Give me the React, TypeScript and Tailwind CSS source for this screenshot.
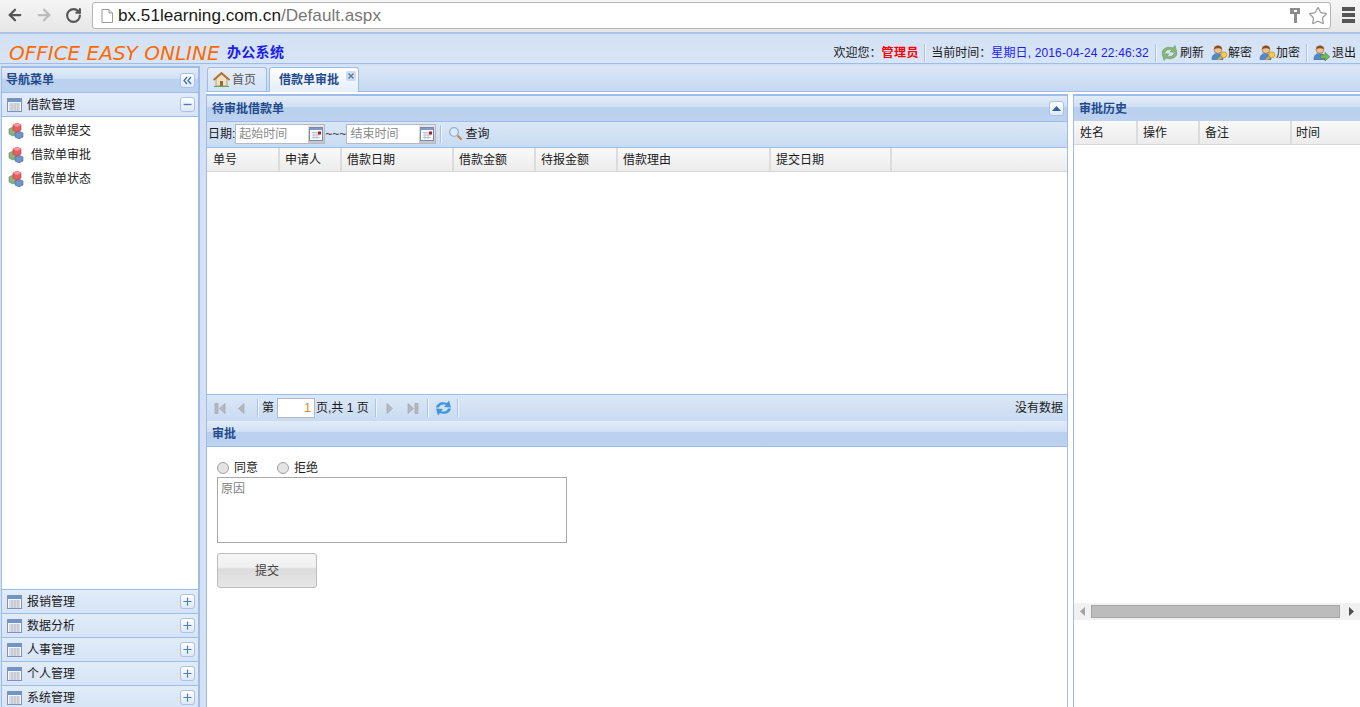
import { ArrowLeft, ArrowRight, RotateCw, Star } from "lucide-react";

const cjk = "font-['Liberation_Sans','Noto_Sans_CJK_SC',sans-serif]";
const titleBg = "bg-[linear-gradient(to_bottom,#e3ecf8_0%,#cfdff3_45%,#b9d0ee_46%,#bcd2ef_100%)]";
const barBg = "bg-[linear-gradient(to_bottom,#dbe7f6,#c9dbf1)]";
const headBg = "bg-[linear-gradient(to_bottom,#f9f9f9,#ececec)]";

function TableIcon() {
  return (
    <svg width="15" height="14" viewBox="0 0 15 14" className="shrink-0">
      <rect x="0.5" y="0.5" width="14" height="13" fill="#f4f6fa" stroke="#7f93b2" />
      <rect x="1" y="1" width="13" height="3" fill="#6e94cb" />
      <path d="M2 6h11M2 8h11M2 10h11M2 12h11M5 5v8M8 5v8M11 5v8" stroke="#b9bfc9" strokeWidth="1" />
    </svg>
  );
}

function BoxButton({ kind }: { kind: "plus" | "minus" | "left" | "up" }) {
  return (
    <span className="flex h-[15px] w-[15px] shrink-0 items-center justify-center rounded-[3px] border border-[#a9c3e6] bg-[linear-gradient(to_bottom,#ffffff,#dde9f8)]">
      <svg width="11" height="11" viewBox="0 0 11 11">
        {kind === "plus" && <path d="M1.5 5.5h8M5.5 1.5v8" stroke="#4f7fb8" strokeWidth="1.2" />}
        {kind === "minus" && <path d="M1.5 5.5h8" stroke="#4f7fb8" strokeWidth="1.4" />}
        {kind === "left" && <path d="M5 2L2 5.5 5 9M9 2L6 5.5 9 9" stroke="#3f6fa8" strokeWidth="1.3" fill="none" />}
        {kind === "up" && <path d="M5.5 3L10 8H1z" fill="#2f5f9f" />}
      </svg>
    </span>
  );
}

function CubesIcon() {
  return (
    <svg width="17" height="16" viewBox="0 0 17 16" className="shrink-0">
      <path d="M1 6l4-2 4 2v5l-4 2-4-2z" fill="#8cb07f" stroke="#5f8a5c" strokeWidth="0.6" />
      <path d="M7 10l4-2 4 2v4l-4 2-4-2z" fill="#6d95c6" stroke="#45699a" strokeWidth="0.6" />
      <path d="M5 2l4-2 4 2v5l-4 2-4-2z" fill="#ee5a5f" stroke="#b93a40" strokeWidth="0.6" />
      <path d="M5 2l4 2 4-2-4-2z" fill="#f79a9a" />
    </svg>
  );
}

function HomeIcon() {
  return (
    <svg width="17" height="15" viewBox="0 0 17 15" className="shrink-0">
      <path d="M3 7v7h11V7L8.5 2z" fill="#efe2c2" stroke="#a58a5a" strokeWidth="0.7" />
      <path d="M0.5 8L8.5 1l8 7" fill="none" stroke="#b0702e" strokeWidth="1.8" />
      <rect x="7" y="9" width="3" height="5" fill="#9a6b35" />
      <path d="M1 14.5h15" stroke="#6da35a" strokeWidth="1.2" />
    </svg>
  );
}

function CalendarButton() {
  return (
    <span className="flex h-[18px] w-[16px] shrink-0 items-center justify-center bg-[linear-gradient(to_bottom,#e6e6e6,#c4c4c4)]">
      <svg width="14" height="14" viewBox="0 0 14 14">
        <rect x="0.5" y="0.5" width="13" height="13" fill="#f6f8fb" stroke="#7b8ba3" />
        <rect x="1" y="1" width="12" height="2" fill="#7a9bcb" />
        <path d="M3 5.500h5M3 8h8M3 10.500h8M5 5v7M8 5v7" stroke="#bcc4d0" />
        <rect x="9" y="4.500" width="3" height="3" fill="#a81c2c" />
      </svg>
    </span>
  );
}

function SearchIcon() {
  return (
    <svg width="15" height="15" viewBox="0 0 15 15" className="shrink-0">
      <circle cx="6" cy="6" r="4.3" fill="#dcecfb" stroke="#8fb1d3" strokeWidth="1.3" />
      <path d="M9.5 9.5l4 4" stroke="#b98b52" strokeWidth="2.2" />
    </svg>
  );
}

function UserIcon({ badge }: { badge: "key" | "exit" }) {
  return (
    <svg width="17" height="16" viewBox="0 0 17 16" className="shrink-0">
      <path d="M1 14.500c0-4.500 2.500-6 5.500-6s5.500 1.500 5.500 6z" fill="#4f8ad0" stroke="#2f5f9b" strokeWidth="0.6" />
      <circle cx="7" cy="4.500" r="3.900" fill="#efc194" stroke="#8c5a30" strokeWidth="0.6" />
      <path d="M3 4.500C3 -.5 11 -.5 11 4.500 8.500 2.800 5.500 2.800 3 4.500z" fill="#8a4f22" />
      {badge === "key" ? (
        <>
          <path d="M11 11.500l-4 3.500" stroke="#e0ad2c" strokeWidth="2.200" />
          <circle cx="12.800" cy="9.800" r="3" fill="#f5cc4f" stroke="#b08520" strokeWidth="0.6" />
        </>
      ) : (
        <path d="M7.500 10h4.500V7.500l4.800 4.200-4.800 4.200V13.400H7.500z" fill="#74b95a" stroke="#3f8136" strokeWidth="0.6" />
      )}
    </svg>
  );
}

function GreenRefresh() {
  return (
    <svg width="17" height="16" viewBox="0 0 17 16" className="shrink-0">
      <path d="M1 7.500C2 3 7 1 12 3L14 .5l2 7-7-.5 2-2.200C8 3.800 4.500 4.800 4 7.500z" fill="#86b779" stroke="#5c9450" strokeWidth="0.5" />
      <path d="M16 8.500c-1 4.500-6 6.500-11 4.500L3 15.500 1 8.500l7 .5-2 2.200C9 12.200 12.500 11.200 13 8.500z" fill="#86b779" stroke="#5c9450" strokeWidth="0.5" />
    </svg>
  );
}

function BlueRefresh() {
  return (
    <svg width="17" height="16" viewBox="0 0 17 16" className="shrink-0">
      <path d="M1 7.500C2 3 7 1 12 3L14 .5l2 7-7-.5 2-2.200C8 3.800 4.500 4.800 4 7.500z" fill="#3d97dd" />
      <path d="M16 8.500c-1 4.500-6 6.500-11 4.500L3 15.500 1 8.500l7 .5-2 2.200C9 12.200 12.500 11.200 13 8.500z" fill="#3d97dd" />
    </svg>
  );
}

function Sep({ className = "mx-[4px]" }: { className?: string }) {
  return <span className={`h-[18px] w-px shrink-0 bg-[#a9c4e8] shadow-[1px_0_0_#eef4fb] ${className}`} />;
}

function PagerArrow({ dir, end }: { dir: "left" | "right"; end?: boolean }) {
  return (
    <svg width="16" height="13" viewBox="0 0 16 13" className="shrink-0">
      {dir === "left" ? (
        <>
          {end && <rect x="2" y="1.500" width="3" height="10" fill="#b4b9c0" stroke="#9aa0a8" strokeWidth="0.6" />}
          <path d="M12 1.500v10L6.500 6.500z" fill="#b4b9c0" stroke="#9aa0a8" strokeWidth="0.6" />
        </>
      ) : (
        <>
          <path d="M4 1.500v10l5.500-5z" fill="#b4b9c0" stroke="#9aa0a8" strokeWidth="0.6" />
          {end && <rect x="11" y="1.500" width="3" height="10" fill="#b4b9c0" stroke="#9aa0a8" strokeWidth="0.6" />}
        </>
      )}
    </svg>
  );
}

function PanelTitle({ text, children }: { text: string; children?: React.ReactNode }) {
  return (
    <div className={`flex h-[25px] shrink-0 items-center justify-between pr-[3px] pl-[5px] ${titleBg}`}>
      <span className="text-[12px] font-bold text-[#234a8c]">{text}</span>
      {children}
    </div>
  );
}

function DateInput({ placeholder }: { placeholder: string }) {
  return (
    <span className="flex h-[20px] w-[90px] shrink-0 items-center border border-[#b5b8c8] bg-white">
      <span className="flex-1 pl-[3px] text-[12px] text-[#8a8a8a]">{placeholder}</span>
      <CalendarButton />
    </span>
  );
}

function HeadCell({ text, w, pad = "pl-[5px]" }: { text: string; w: string; pad?: string }) {
  return (
    <div className={`flex h-full shrink-0 items-center border-r-2 border-[#dcdcdc] text-[12px] text-[#1a1a1a] ${pad} ${w}`}>
      {text}
    </div>
  );
}

function AccordionHead({ text, open }: { text: string; open?: boolean }) {
  return (
    <div className="flex h-[24px] shrink-0 items-center border-t border-[#9dbde8] bg-[linear-gradient(to_bottom,#e2ecf9,#d6e4f6)] pr-[3px] pl-[5px]">
      <TableIcon />
      <span className="ml-[5px] flex-1 text-[12px] text-[#1a1a1a]">{text}</span>
      <BoxButton kind={open ? "minus" : "plus"} />
    </div>
  );
}

function NavLink({ text }: { text: string }) {
  return (
    <div className="flex h-[24px] items-center pl-[6px]">
      <CubesIcon />
      <span className="ml-[6px] text-[12px] text-[#222]">{text}</span>
    </div>
  );
}

export default function App() {
  return (
    <div className={`flex h-screen flex-col overflow-hidden bg-[#d3e1f3] ${cjk}`}>
      {/* browser chrome */}
      <div className="flex h-[34px] shrink-0 items-start border-b-2 border-[#a9c4e8] bg-[linear-gradient(to_bottom,#f5f5f5,#e6e6e6)] pt-[2px]">
        <div className="flex h-[26px] w-[92px] items-center pl-[6px] text-[#555]">
          <ArrowLeft size={18} strokeWidth={3} />
          <ArrowRight size={18} strokeWidth={3} className="ml-[11px] text-[#bbb]" />
          <RotateCw size={17} strokeWidth={3} className="ml-[12px]" />
        </div>
        <div className="flex h-[27px] w-[1239px] items-center rounded-[3px] border border-[#b5b5b5] bg-white pr-[2px] pl-[8px] font-['Liberation_Sans',sans-serif]">
          <svg width="12" height="14" viewBox="0 0 12 14" className="shrink-0">
            <path d="M1 .5h7l3.500 3.500v9.500H1z" fill="#fff" stroke="#9a9a9a" />
            <path d="M8 .5V4h3.500" fill="#ddd" stroke="#9a9a9a" />
          </svg>
          <span className="ml-[5px] flex-1 text-[17.15px] text-[#1a1a1a]">
            bx.51learning.com.cn<span className="text-[#777]">/Default.aspx</span>
          </span>
          <svg width="10" height="17" viewBox="0 0 10 17" className="mr-[8px] shrink-0">
            <path d="M0 1h10v6H7v9H4V7H0z" fill="#8c8c8c" />
            <rect x="4" y="3" width="3" height="2" fill="#fff" />
          </svg>
          <Star size={20} strokeWidth={1.5} className="text-[#999]" />
        </div>
        <div className="flex h-[26px] flex-1 flex-col items-center justify-center gap-[2px] pl-[6px]">
          <span className="h-[4px] w-[13px] bg-[#555]" />
          <span className="h-[4px] w-[13px] bg-[#555]" />
          <span className="h-[4px] w-[13px] bg-[#555]" />
        </div>
      </div>

      {/* system header */}
      <div className="flex h-[30px] shrink-0 items-center justify-between border-b border-[#9dbde8] bg-[linear-gradient(to_bottom,#d3e1f4,#d8e5f6)] pr-[4px] pl-[9px]">
        <div className="flex items-center pt-[8px]">
          <span className="w-[209px] text-[20px] leading-none whitespace-nowrap text-[#ff6a00] italic font-['DejaVu_Sans',sans-serif]">
            OFFICE EASY ONLINE
          </span>
          <span className="ml-[9px] text-[14px] font-bold tracking-[0.3px] text-[#1c1cf0]">办公系统</span>
        </div>
        <div className="flex items-center pt-[8px] text-[12px] text-[#1a1a1a]">
          <span>欢迎您：</span>
          <span className="tracking-[0.6px] font-bold text-[#ff0000]">管理员</span>
          <Sep className="mr-[6px] ml-[5px]" />
          <span>当前时间：</span>
          <span className="tracking-[0.15px] text-[#1c1cf0]">星期日, 2016-04-24 22:46:32</span>
          <Sep className="mr-[5px] ml-[6px]" />
          <GreenRefresh />
          <span className="ml-[2px]">刷新</span>
          <span className="w-[7px]" />
          <UserIcon badge="key" />
          <span>解密</span>
          <span className="w-[7px]" />
          <UserIcon badge="key" />
          <span>加密</span>
          <Sep className="mx-[6px]" />
          <UserIcon badge="exit" />
          <span className="ml-[2px]">退出</span>
        </div>
      </div>

      <div className="flex min-h-0 flex-1 pt-[2px]">
        {/* left nav */}
        <div className="mb-[-2px] ml-[1px] flex w-[199px] shrink-0 flex-col border-t-2 border-r-2 border-l border-[#9dbde8] bg-white">
          <div className={`flex h-[24px] shrink-0 items-center justify-between pr-[3px] pl-[4px] ${titleBg}`}>
            <span className="text-[12px] font-bold text-[#234a8c]">导航菜单</span>
            <BoxButton kind="left" />
          </div>
          <AccordionHead text="借款管理" open />
          <div className="min-h-0 flex-1 border-t border-[#9dbde8] pt-[2px]">
            <NavLink text="借款单提交" />
            <NavLink text="借款单审批" />
            <NavLink text="借款单状态" />
          </div>
          <AccordionHead text="报销管理" />
          <AccordionHead text="数据分析" />
          <AccordionHead text="人事管理" />
          <AccordionHead text="个人管理" />
          <AccordionHead text="系统管理" />
        </div>

        <div className="ml-[6px] flex min-w-0 flex-1 flex-col">
          {/* tabs */}
          <div className="flex h-[26px] shrink-0 items-end border-b border-[#9dbde8] bg-[linear-gradient(to_bottom,#dbe7f6,#c6d9f0)] pl-[1px]">
            <div className="flex h-[24px] w-[60px] items-center gap-[2px] rounded-t-[3px] border border-b-0 border-[#9dbde8] bg-[linear-gradient(to_bottom,#e6eef9,#d3e2f5)] pl-[5px] text-[12px] text-[#555]">
              <HomeIcon />
              首页
            </div>
            <div className="relative -mb-px ml-[2px] flex h-[25px] w-[90px] items-center rounded-t-[3px] border border-b-0 border-[#9dbde8] bg-[linear-gradient(to_bottom,#ffffff,#e4edf9)] pl-[9px] text-[12px] font-bold text-[#234a8c]">
              借款单审批
              <span className="absolute top-[3px] right-[2px] flex h-[10px] w-[10px] items-center justify-center rounded-[2px] bg-[#cfdcf0]">
                <svg width="8" height="8" viewBox="0 0 8 8">
                  <path d="M1.500 1.500l5 5M6.500 1.500l-5 5" stroke="#5a7bb0" strokeWidth="1.400" />
                </svg>
              </span>
            </div>
          </div>

          <div className="flex min-h-0 flex-1 bg-white pt-[2px]">
            {/* center panel */}
            <div className="flex w-[862px] shrink-0 flex-col border-t-2 border-r border-l border-[#9dbde8] bg-white">
              <PanelTitle text="待审批借款单">
                <BoxButton kind="up" />
              </PanelTitle>
              <div className={`flex h-[27px] shrink-0 items-center border-y border-[#9dbde8] pb-[2px] pl-[1px] text-[12px] text-[#1a1a1a] ${barBg}`}>
                <span>日期:</span>
                <DateInput placeholder="起始时间" />
                <span className="text-[#444]">~~~</span>
                <DateInput placeholder="结束时间" />
                <Sep />
                <span className="w-[3px]" />
                <SearchIcon />
                <span className="ml-[2px]">查询</span>
              </div>
              <div className={`flex h-[24px] shrink-0 border-b border-[#d8d8d8] ${headBg}`}>
                <HeadCell text="单号" w="w-[73px]" pad="pl-[6px]" />
                <HeadCell text="申请人" w="w-[62px]" />
                <HeadCell text="借款日期" w="w-[112px]" />
                <HeadCell text="借款金额" w="w-[82px]" />
                <HeadCell text="待报金额" w="w-[82px]" />
                <HeadCell text="借款理由" w="w-[153px]" />
                <HeadCell text="提交日期" w="w-[121px]" />
              </div>
              <div className="h-[222px] shrink-0 bg-white" />
              <div className={`flex h-[27px] shrink-0 items-center border-t border-[#9dbde8] pr-[4px] pl-[6px] text-[12px] text-[#1a1a1a] ${barBg}`}>
                <PagerArrow dir="left" end />
                <span className="w-[3px]" />
                <PagerArrow dir="left" />
                <span className="w-[5px]" />
                <Sep />
                <span>第</span>
                <span className="mr-[1px] ml-[3px] flex h-[20px] w-[38px] items-center justify-end border border-[#b5b8c8] bg-white pr-[3px] text-[#d9822b]">1</span>
                <span>页,共 1 页</span>
                <span className="w-[2px]" />
                <Sep />
                <span className="w-[3px]" />
                <PagerArrow dir="right" />
                <span className="w-[5px]" />
                <PagerArrow dir="right" end />
                <span className="w-[3px]" />
                <Sep />
                <span className="w-[3px]" />
                <BlueRefresh />
                <span className="w-[1px]" />
                <Sep />
                <span className="flex-1 text-right">没有数据</span>
              </div>
              <div className="shrink-0 border-b border-[#9dbde8]">
                <PanelTitle text="审批" />
              </div>
              <div className="flex-1 bg-white pt-[13px] pl-[10px] text-[12px] text-[#1a1a1a]">
                <div className="flex h-[16px] items-center">
                  <span className="h-[12px] w-[12px] rounded-full border border-[#a0a0a0] bg-[#e4e4e4]" />
                  <span className="ml-[5px] w-[43px]">同意</span>
                  <span className="h-[12px] w-[12px] rounded-full border border-[#a0a0a0] bg-[#e4e4e4]" />
                  <span className="ml-[5px]">拒绝</span>
                </div>
                <div className="mt-[1px] h-[66px] w-[350px] border border-[#a9a9a9] pt-[2px] pl-[3px] text-[#808080]">原因</div>
                <div className="mt-[10px] flex h-[35px] w-[100px] items-center justify-center rounded-[3px] border border-[#bdbdbd] bg-[linear-gradient(to_bottom,#f5f5f5_0%,#f0f0f0_40%,#dcdcdc_45%,#e6e6e6_100%)] text-[#444]">
                  提交
                </div>
              </div>
            </div>

            {/* right panel */}
            <div className="ml-[5px] flex min-w-0 flex-1 flex-col border-t-2 border-l border-[#9dbde8] bg-white">
              <PanelTitle text="审批历史" />
              <div className={`flex h-[24px] shrink-0 border-b border-[#d8d8d8] ${headBg}`}>
                <HeadCell text="姓名" w="w-[64px]" pad="pl-[6px]" />
                <HeadCell text="操作" w="w-[62px]" />
                <HeadCell text="备注" w="w-[92px]" />
                <HeadCell text="时间" w="w-[70px]" pad="pl-[4px]" />
              </div>
              <div className="h-[458px] shrink-0" />
              <div className="flex h-[17px] shrink-0 items-center bg-[#f1f1f1] px-[5px]">
                <svg width="7" height="9" viewBox="0 0 7 9" className="shrink-0"><path d="M6 0v9L1 4.500z" fill="#a3a3a3" /></svg>
                <span className="ml-[5px] h-[13px] w-[249px] border border-[#a6a6a6] bg-[#bcbcbc]" />
                <span className="flex-1" />
                <svg width="7" height="9" viewBox="0 0 7 9" className="shrink-0"><path d="M1 0v9l5-4.500z" fill="#505050" /></svg>
              </div>
            </div>
          </div>
        </div>
      </div>
    </div>
  );
}
